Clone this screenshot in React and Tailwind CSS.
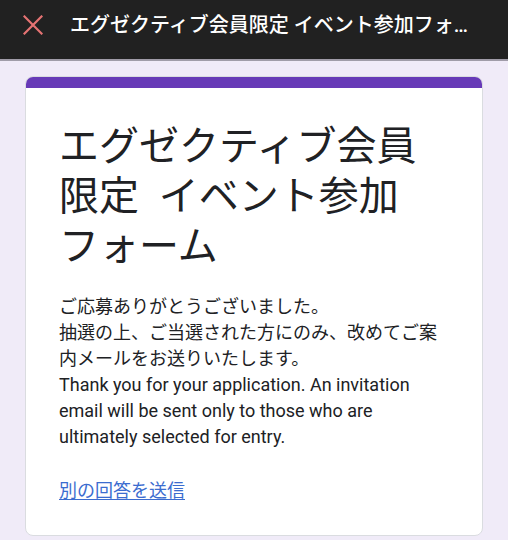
import React from "react";

const font = { fontFamily: 'Roboto, "Noto Sans CJK JP", sans-serif' };

export default function App() {
  return (
    <div className="w-[508px] h-[540px] overflow-hidden bg-[#f0ebf8] flex flex-col" style={font}>
      <div className="h-[61px] shrink-0 bg-[#212121] flex items-center pb-[10px] pl-[23px] pr-6 border-b-2 border-[#a09ca8]">
        <svg width="20" height="20" viewBox="0 0 20 20" className="shrink-0">
          <path d="M1.5 1.5 L18.5 18.5 M18.5 1.5 L1.5 18.5" stroke="#e57373" strokeWidth="2.2" strokeLinecap="square" fill="none" />
        </svg>
        <div className="ml-[27px] text-white text-[20px] font-medium truncate leading-[26px]">
          エグゼクティブ会員限定 イベント参加フォーム
        </div>
      </div>
      <div className="px-[25px] pt-[15px]">
        <div className="bg-white rounded-[8px] border border-[#dadce0] overflow-hidden">
          <div className="h-[11px] bg-[#673ab7]" />
          <div className="pl-[33px] pr-[32px] pt-[34px] pb-[31px]">
            <h1 className="w-[372px] text-[40px] leading-[50px] text-[#202124] font-normal whitespace-pre-wrap">
              {"エグゼクティブ会員限定  イベント参加フォーム"}
            </h1>
            <div className="mt-[22px] text-[18px] leading-[26px] text-[#202124]">
              <p>ご応募ありがとうございました。</p>
              <p>抽選の上、ご当選された方にのみ、改めてご案内メールをお送りいたします。</p>
              <p>Thank you for your application. An invitation email will be sent only to those who are ultimately selected for entry.</p>
            </div>
            <div className="mt-[28px] text-[18px] leading-[26px]">
              <a href="#" className="text-[#3b6ccf] underline underline-offset-2">別の回答を送信</a>
            </div>
          </div>
        </div>
      </div>
    </div>
  );
}
